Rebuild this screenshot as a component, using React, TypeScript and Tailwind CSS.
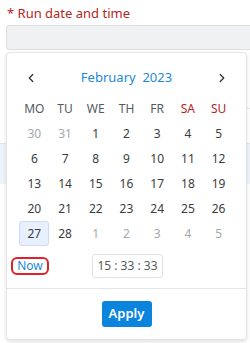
// Run date and time picker with an open calendar popup

import { ChevronLeft, ChevronRight } from 'lucide-react'

const weekdays = [
  { label: 'MO', weekend: false },
  { label: 'TU', weekend: false },
  { label: 'WE', weekend: false },
  { label: 'TH', weekend: false },
  { label: 'FR', weekend: false },
  { label: 'SA', weekend: true },
  { label: 'SU', weekend: true },
]

type Day = { n: number; muted?: boolean; selected?: boolean }

const weeks: Day[][] = [
  [{ n: 30, muted: true }, { n: 31, muted: true }, { n: 1 }, { n: 2 }, { n: 3 }, { n: 4 }, { n: 5 }],
  [{ n: 6 }, { n: 7 }, { n: 8 }, { n: 9 }, { n: 10 }, { n: 11 }, { n: 12 }],
  [{ n: 13 }, { n: 14 }, { n: 15 }, { n: 16 }, { n: 17 }, { n: 18 }, { n: 19 }],
  [{ n: 20 }, { n: 21 }, { n: 22 }, { n: 23 }, { n: 24 }, { n: 25 }, { n: 26 }],
  [
    { n: 27, selected: true },
    { n: 28 },
    { n: 1, muted: true },
    { n: 2, muted: true },
    { n: 3, muted: true },
    { n: 4, muted: true },
    { n: 5, muted: true },
  ],
]

export default function App() {
  return (
    <div className="relative h-[343px] w-[250px] overflow-hidden bg-white font-['Noto_Sans',sans-serif]">
      {/* Field label */}
      <div className="pl-[7px] pt-[4px] text-[13px] leading-[18px] text-[#b3261e]">
        * Run date and time
      </div>

      {/* Input */}
      <div className="ml-[6px] mt-[3px] h-[25px] w-[260px] rounded-[3px] border border-[#dcdee2] bg-[#f0f1f3]" />

      {/* Page content behind the popup */}
      <div className="ml-auto mt-[58px] h-px w-[10px] bg-[#e3e5e8]" />
      <div className="mt-[34px] h-px bg-[#e3e5e8]" />
      <div className="h-[40px] bg-[#edf4fc]" />

      {/* Calendar popup */}
      <div className="absolute left-[6px] top-[52px] w-[241px] rounded-[4px] border border-[#e4e5e7] bg-white shadow-[0_2px_4px_rgba(0,0,0,0.12)]">
        <div className="px-[12px] pt-[15px]">
          <div className="flex h-[20px] items-center justify-between px-[5px]">
            <ChevronLeft size={14} strokeWidth={2.2} className="text-[#333]" />
            <div className="text-[13px] text-[#1e88d8] whitespace-pre">February  2023</div>
            <ChevronRight size={14} strokeWidth={2.2} className="text-[#333]" />
          </div>

          <div className="mt-[8px] grid grid-cols-7">
            {weekdays.map((w) => (
              <div
                key={w.label}
                className={`flex h-[25px] items-center justify-center text-[12px] ${
                  w.weekend ? 'text-[#b3261e]' : 'text-[#555a60]'
                }`}
              >
                {w.label}
              </div>
            ))}
            {weeks.flat().map((d, i) => (
              <div key={i} className="flex h-[25px] items-center justify-center">
                <div
                  className={`flex h-[25px] w-[30px] items-center justify-center rounded-[3px] text-[12px] ${
                    d.selected ? 'border border-[#c9daf3] bg-[#e7f0fc]' : ''
                  } ${d.muted ? 'text-[#a5a8ad]' : 'text-[#3a3d42]'}`}
                >
                  {d.n}
                </div>
              </div>
            ))}
          </div>

          <div className="mt-[8px] flex h-[24px] items-center">
            <div className="ml-[-8px] flex h-[18px] w-[38px] items-center justify-center rounded-[6px] border-2 border-[#e0202a] text-[12px] text-[#1e88d8]">
              Now
            </div>
            <div className="ml-[43px] flex h-[24px] w-[71px] items-center justify-center rounded-[3px] border border-[#dfe1e4] text-[12px] text-[#555a60]">
              15 : 33 : 33
            </div>
          </div>
        </div>

        <div className="mt-[10px] h-px bg-[#e4e5e7]" />

        <div className="flex justify-center pb-[12px] pt-[12px]">
          <button className="h-[26px] w-[50px] rounded-[3px] bg-[#0b84de] text-[13px] font-semibold text-white">
            Apply
          </button>
        </div>
      </div>
    </div>
  )
}
